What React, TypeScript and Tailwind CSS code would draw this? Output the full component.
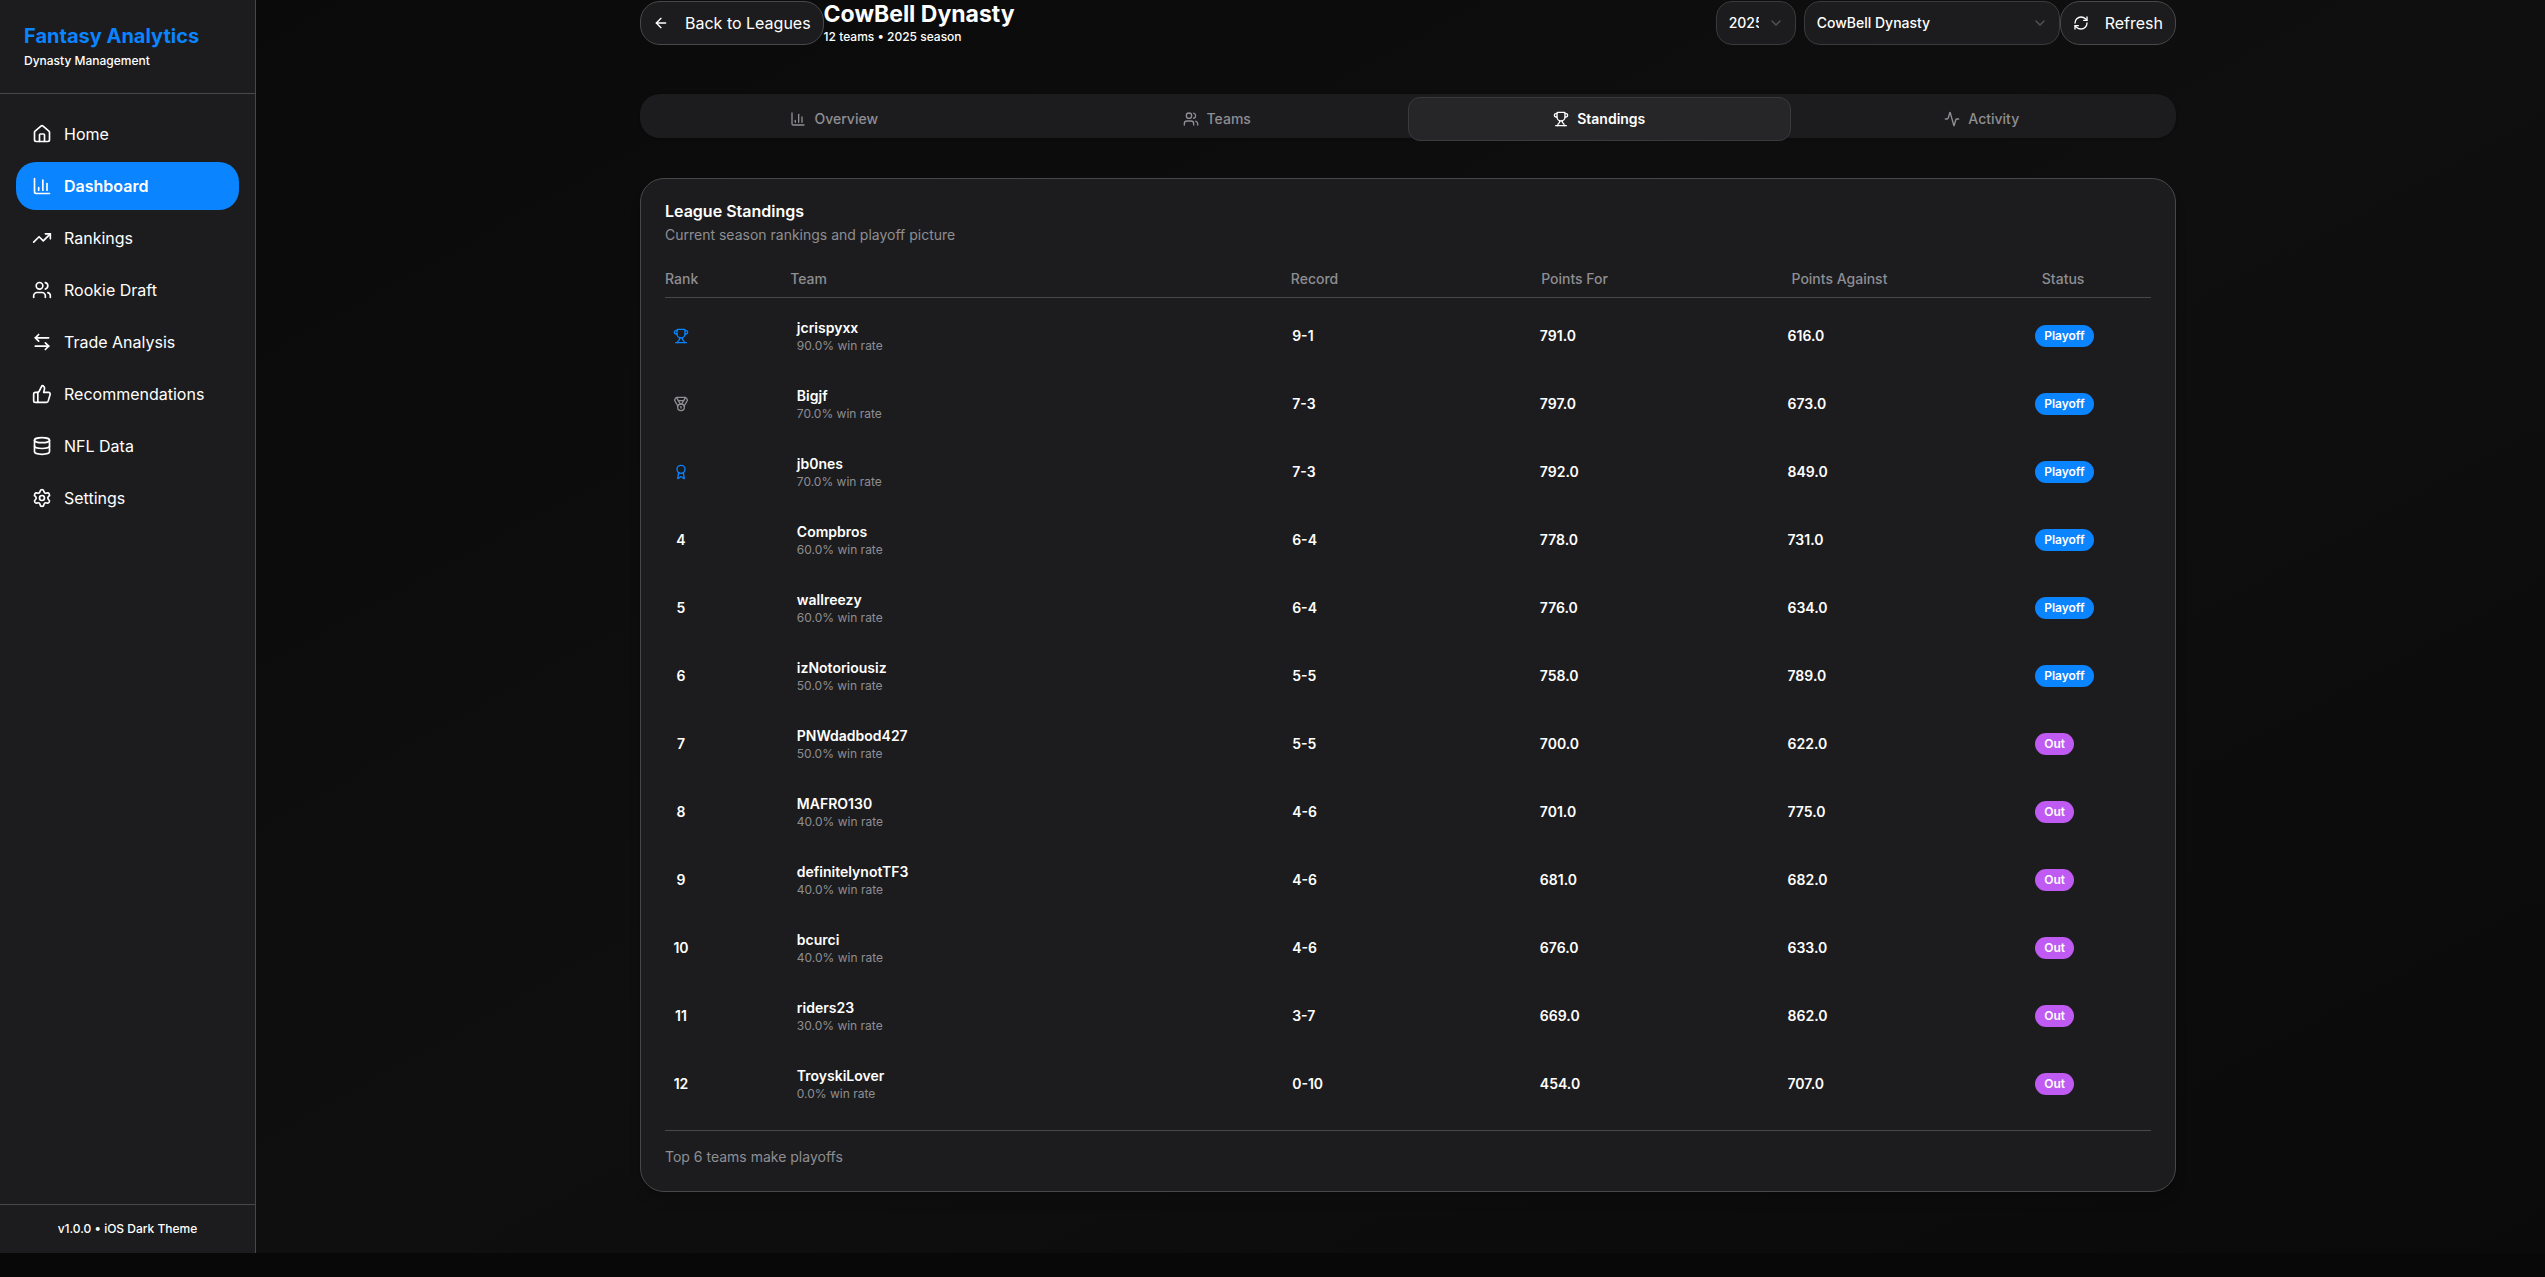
import {
  Activity,
  ArrowLeft,
  ArrowLeftRight,
  Award,
  ChartColumn,
  ChevronDown,
  Database,
  House,
  Medal,
  RefreshCw,
  Settings,
  ThumbsUp,
  TrendingUp,
  Trophy,
  Users,
} from 'lucide-react';
import type { LucideIcon } from 'lucide-react';

type NavItem = { label: string; icon: LucideIcon; active?: boolean };

const navItems: NavItem[] = [
  { label: 'Home', icon: House },
  { label: 'Dashboard', icon: ChartColumn, active: true },
  { label: 'Rankings', icon: TrendingUp },
  { label: 'Rookie Draft', icon: Users },
  { label: 'Trade Analysis', icon: ArrowLeftRight },
  { label: 'Recommendations', icon: ThumbsUp },
  { label: 'NFL Data', icon: Database },
  { label: 'Settings', icon: Settings },
];

const tabs: NavItem[] = [
  { label: 'Overview', icon: ChartColumn },
  { label: 'Teams', icon: Users },
  { label: 'Standings', icon: Trophy, active: true },
  { label: 'Activity', icon: Activity },
];

type Team = { name: string; rate: string; record: string; pf: string; pa: string };

const teams: Team[] = [
  { name: 'jcrispyxx', rate: '90.0', record: '9-1', pf: '791.0', pa: '616.0' },
  { name: 'Bigjf', rate: '70.0', record: '7-3', pf: '797.0', pa: '673.0' },
  { name: 'jb0nes', rate: '70.0', record: '7-3', pf: '792.0', pa: '849.0' },
  { name: 'Compbros', rate: '60.0', record: '6-4', pf: '778.0', pa: '731.0' },
  { name: 'wallreezy', rate: '60.0', record: '6-4', pf: '776.0', pa: '634.0' },
  { name: 'izNotoriousiz', rate: '50.0', record: '5-5', pf: '758.0', pa: '789.0' },
  { name: 'PNWdadbod427', rate: '50.0', record: '5-5', pf: '700.0', pa: '622.0' },
  { name: 'MAFRO130', rate: '40.0', record: '4-6', pf: '701.0', pa: '775.0' },
  { name: 'definitelynotTF3', rate: '40.0', record: '4-6', pf: '681.0', pa: '682.0' },
  { name: 'bcurci', rate: '40.0', record: '4-6', pf: '676.0', pa: '633.0' },
  { name: 'riders23', rate: '30.0', record: '3-7', pf: '669.0', pa: '862.0' },
  { name: 'TroyskiLover', rate: '0.0', record: '0-10', pf: '454.0', pa: '707.0' },
];

const PLAYOFF_SPOTS = 6;

function Sidebar() {
  return (
    <aside className="flex w-64 shrink-0 flex-col border-r border-[#48484a] bg-[#1c1c1e]">
      <div className="border-b border-[#48484a] p-6">
        <div className="text-xl leading-[25px] font-bold text-[#0a84ff]">Fantasy Analytics</div>
        <p className="mt-1 text-xs font-medium">Dynasty Management</p>
      </div>
      <nav className="flex flex-1 flex-col gap-1 p-4">
        {navItems.map(({ label, icon: Icon, active }) => (
          <a
            key={label}
            href="#"
            aria-current={active ? 'page' : undefined}
            className={
              active
                ? 'flex h-12 items-center gap-3 rounded-[20px] bg-[#0a84ff] px-4 font-semibold'
                : 'flex h-12 items-center gap-3 rounded-[20px] px-4'
            }
          >
            <Icon className="size-5" />
            {label}
          </a>
        ))}
      </nav>
      <div className="border-t border-[#48484a] p-4 text-center text-xs font-medium">
        v1.0.0 • iOS Dark Theme
      </div>
    </aside>
  );
}

function Header() {
  return (
    <header className="flex items-center justify-between">
      <div className="flex items-center">
        <button className="flex h-11 items-center gap-4 rounded-[20px] border border-[#48484a] bg-[#1c1c1e] px-3">
          <ArrowLeft className="size-4" />
          Back to Leagues
        </button>
        <div>
          <h1 className="text-[23px] leading-7 font-bold">CowBell Dynasty</h1>
          <p className="text-xs leading-[18px] font-medium">12 teams • 2025 season</p>
        </div>
      </div>
      <div className="flex items-center">
        <div className="relative mr-2">
          <select
            aria-label="Season"
            className="h-11 w-20 appearance-none rounded-2xl border border-[#3a3a3c] bg-[#1c1c1e] pr-9 pl-3 text-sm font-medium text-clip"
          >
            <option>2025</option>
          </select>
          <ChevronDown className="pointer-events-none absolute top-3.5 right-3 size-4 text-[#8e8e93] opacity-50" />
        </div>
        <div className="relative">
          <select
            aria-label="League"
            className="h-11 w-64 appearance-none rounded-2xl border border-[#3a3a3c] bg-[#1c1c1e] pr-9 pl-3 text-sm font-medium"
          >
            <option>CowBell Dynasty</option>
          </select>
          <ChevronDown className="pointer-events-none absolute top-3.5 right-3 size-4 text-[#8e8e93] opacity-50" />
        </div>
        <button className="flex h-11 items-center gap-4 rounded-[20px] border border-[#48484a] bg-[#1c1c1e] px-3">
          <RefreshCw className="size-4" />
          Refresh
        </button>
      </div>
    </header>
  );
}

function Tabs() {
  return (
    <div role="tablist" className="mt-12 grid h-11 grid-cols-4 rounded-[20px] bg-[#1c1c1e] p-[3px] shadow-sm">
      {tabs.map(({ label, icon: Icon, active }) => (
        <button
          key={label}
          role="tab"
          aria-selected={!!active}
          className={
            active
              ? 'flex h-11 items-center justify-center gap-2 rounded-xl border border-[#3a3a3c] bg-[#262628] text-sm font-semibold'
              : 'flex h-11 items-center justify-center gap-2 rounded-xl text-sm font-medium text-[#8e8e93]'
          }
        >
          <Icon className="size-4" />
          {label}
        </button>
      ))}
    </div>
  );
}

function Rank({ rank }: { rank: number }) {
  if (rank === 1) return <Trophy aria-label="1" className="size-4 text-[#0a84ff]" />;
  if (rank === 2) return <Medal aria-label="2" className="size-4 text-[#8e8e93]" />;
  if (rank === 3) return <Award aria-label="3" className="size-4 text-[#0a84ff]" />;
  return <span className="flex w-4 justify-center">{rank}</span>;
}

function Standings() {
  return (
    <section className="mt-10 rounded-3xl border border-[#48484a] bg-[#1c1c1e] p-6 shadow-lg">
      <h2 className="text-base leading-4 font-semibold">League Standings</h2>
      <p className="mt-1.5 text-sm text-[#8e8e93]">Current season rankings and playoff picture</p>
      <table className="mt-6 block text-sm">
        <thead className="block border-b border-[#48484a] pb-2 text-[#8e8e93]">
          <tr className="grid grid-cols-12 gap-4 text-left">
            <th className="font-medium">Rank</th>
            <th className="col-span-4 font-medium">Team</th>
            <th className="col-span-2 font-medium">Record</th>
            <th className="col-span-2 font-medium">Points For</th>
            <th className="col-span-2 font-medium">Points Against</th>
            <th className="font-medium">Status</th>
          </tr>
        </thead>
        <tbody className="mt-2 flex flex-col gap-2">
          {teams.map((team, i) => (
            <tr key={team.name} className="grid grid-cols-12 items-center gap-4 px-2 py-3 font-semibold">
              <td>
                <Rank rank={i + 1} />
              </td>
              <td className="col-span-4">
                <div>{team.name}</div>
                <div className="text-xs font-normal text-[#8e8e93]">{team.rate}% win rate</div>
              </td>
              <td className="col-span-2">{team.record}</td>
              <td className="col-span-2">{team.pf}</td>
              <td className="col-span-2">{team.pa}</td>
              <td className="flex">
                <span
                  className={
                    i < PLAYOFF_SPOTS
                      ? 'rounded-full bg-[#0a84ff] px-[9px] py-[3px] text-xs font-semibold'
                      : 'rounded-full bg-[#bf5af2] px-[9px] py-[3px] text-xs font-semibold'
                  }
                >
                  {i < PLAYOFF_SPOTS ? 'Playoff' : 'Out'}
                </span>
              </td>
            </tr>
          ))}
        </tbody>
      </table>
      <p className="mt-4 border-t border-[#48484a] pt-4 text-sm text-[#8e8e93]">
        Top {PLAYOFF_SPOTS} teams make playoffs
      </p>
    </section>
  );
}

export default function App() {
  return (
    <div className="flex min-h-screen flex-col bg-[#080808] pb-6 font-['Inter',sans-serif] text-white">
      <div className="flex flex-1">
        <Sidebar />
        <main className="flex-1 bg-[linear-gradient(to_bottom_right,#0a0a0a_0%,#0f0f0f_50%,#0a0a0a_100%)] pl-[15px]">
          <div className="mx-auto w-full max-w-[1536px]">
            <Header />
            <Tabs />
            <Standings />
          </div>
        </main>
      </div>
    </div>
  );
}
